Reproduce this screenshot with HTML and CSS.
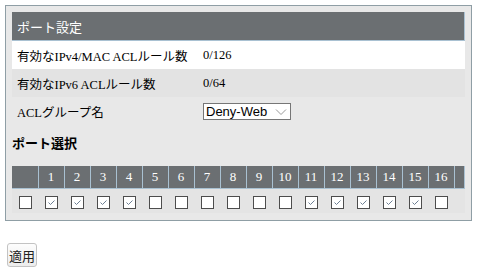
FILE: index.html
```html
<!DOCTYPE html>
<html lang="ja">
<head>
<meta charset="UTF-8">
<title>ポート設定</title>
<link rel="stylesheet" href="styles.css">
</head>
<body>
<div class="panel">
    <table class="info">
        <tr class="head"><th colspan="2">ポート設定</th></tr>
        <tr class="row-white"><td class="label">有効なIPv4/MAC ACLルール数</td><td>0/126</td></tr>
        <tr class="row-gray"><td class="label">有効なIPv6 ACLルール数</td><td>0/64</td></tr>
        <tr class="row-plain">
            <td class="label">ACLグループ名</td>
            <td>
                <div class="select">
                    <span>Deny-Web</span>
                    <svg width="12" height="8" viewBox="0 0 12 8"><path d="M1 1.5 L6 6.5 L11 1.5" fill="none" stroke="#9a9a9a" stroke-width="1"/></svg>
                </div>
            </td>
        </tr>
    </table>

    <h3 class="section">ポート選択</h3>

    <table class="ports">
        <colgroup>
            <col class="c-first">
            <col span="16" class="c-port">
            <col>
        </colgroup>
        <tr class="port-head" id="portHead"></tr>
        <tr class="port-checks" id="portChecks"></tr>
    </table>
</div>

<button class="apply">適用</button>

<script>
    // ポート番号とチェック状態
    const checked = [1, 2, 3, 4, 11, 12, 13, 14, 15];
    const head = document.getElementById('portHead');
    const checks = document.getElementById('portChecks');
    const tick = '<svg width="11" height="11" viewBox="0 0 11 11"><path d="M2.5 5.5 L4.5 7.5 L8.5 3.5" fill="none" stroke="#6d7f93" stroke-width="1"/></svg>';

    function addCell(row, tag, html) {
        const cell = document.createElement(tag);
        cell.innerHTML = html;
        row.appendChild(cell);
    }

    addCell(head, 'th', '');
    addCell(checks, 'td', '<span class="box"></span>');
    for (let i = 1; i <= 16; i++) {
        addCell(head, 'th', i);
        const on = checked.indexOf(i) !== -1;
        addCell(checks, 'td', '<span class="box">' + (on ? tick : '') + '</span>');
    }
    addCell(head, 'th', '');
    addCell(checks, 'td', '');
</script>
</body>
</html>
```

FILE: styles.css
```css
body {
    margin: 5px 0 0 5px;
    font-family: "Liberation Serif", "Noto Sans CJK JP", serif;
    font-size: 12.5px;
    color: #000;
    background-color: #fff;
}
.panel {
    width: 453px;
    padding: 6px 6px 7px 6px;
    border: 1px solid #8f9ea5;
    background-color: #e8e8e8;
}
.info {
    width: 453px;
    border-collapse: collapse;
}
.info th {
    height: 28px;
    padding: 0 5px;
    text-align: left;
    font-weight: normal;
    font-size: 13px;
    font-family: "Noto Sans CJK JP", sans-serif;
    color: #fff;
    background-color: #6b6f72;
    border-right: 1px solid #a9c1d2;
    border-bottom: 1px solid #a9c1d2;
}
.info td {
    height: 28px;
    padding: 0;
}
.info td.label {
    width: 186px;
    padding-left: 5px;
}
.row-white {
    background-color: #fff;
}
.row-gray {
    background-color: #e3e3e3;
}
.select {
    display: flex;
    align-items: center;
    justify-content: space-between;
    width: 81px;
    height: 15px;
    padding: 0 3px 0 2px;
    box-sizing: content-box;
    border: 1px solid #767676;
    background-color: #fff;
    font-family: "Liberation Sans", Arial, sans-serif;
    font-size: 13px;
}
.select svg {
    margin-top: 1px;
}
.section {
    margin: 8px 0 14px 0;
    font-size: 13px;
    font-weight: bold;
    font-family: "Noto Sans CJK JP", sans-serif;
}
.ports {
    width: 453px;
    table-layout: fixed;
    border-collapse: collapse;
}
.c-first {
    width: 26px;
}
.c-port {
    width: 26px;
}
.port-head th {
    height: 22px;
    padding: 0;
    font-weight: normal;
    font-size: 13px;
    color: #fff;
    background-color: #6b6f72;
    border: 1px solid #a9c1d2;
    border-top: none;
}
.port-head th:first-child {
    border-left: none;
}
.port-checks td {
    height: 24px;
    padding: 0;
    text-align: center;
    background-color: #e4e4e4;
}
.box {
    display: inline-flex;
    align-items: center;
    justify-content: center;
    width: 11px;
    height: 11px;
    margin-top: 2px;
    border: 1px solid #4d4d4d;
    background-color: #fff;
    vertical-align: middle;
}
.apply {
    margin: 22px 0 0 2px;
    width: 30px;
    height: 24px;
    padding: 0;
    font-family: "Noto Sans CJK JP", sans-serif;
    font-size: 13px;
    color: #222;
    border: 1px solid #c3c3c3;
    border-radius: 3px;
    background: linear-gradient(#fdfdfd, #ececec);
}
```
